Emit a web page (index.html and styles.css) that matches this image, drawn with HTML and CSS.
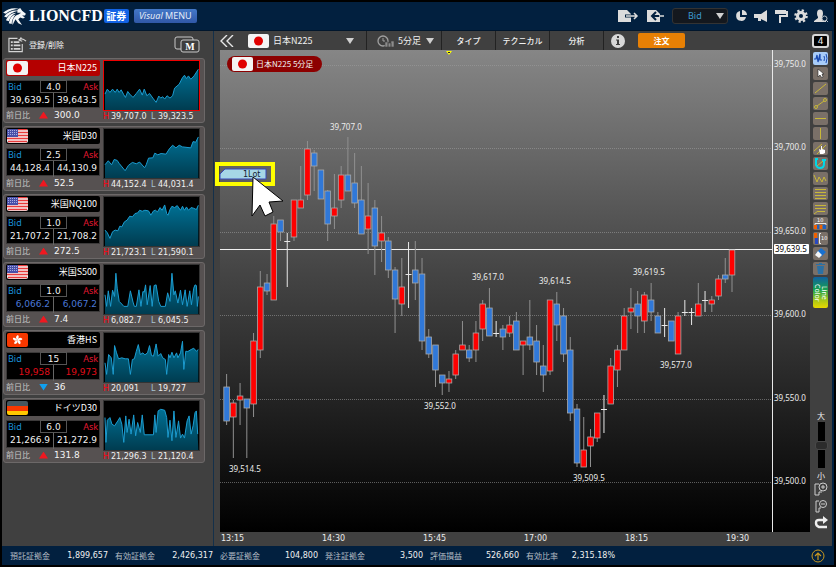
FILE: index.html
```html
<!DOCTYPE html>
<html lang="ja">
<head>
<meta charset="utf-8">
<title>LIONCFD</title>
<link rel="stylesheet" href="styles.css">
</head>
<body>
<svg class="defs" width="0" height="0" aria-hidden="true">
  <defs>
    <linearGradient id="area" x1="0" y1="0" x2="0" y2="1"><stop offset="0" stop-color="#007094"/><stop offset="1" stop-color="#003c50"/></linearGradient>
    <symbol id="jp" viewBox="0 0 21 14"><rect width="21" height="14" rx="2" fill="#f4f4f4"/><circle cx="10.500" cy="7" r="4.500" fill="#e00000"/></symbol>
    <symbol id="us" viewBox="0 0 21 14"><rect width="21" height="14" rx="2" fill="#f4eeee"/><path d="M1 .5H20M0 3.500H21M0 6.500H21M0 9.500H21M1 12.500H20" stroke="#e83a3a" stroke-width="1.400"/><path d="M1 0H11V8H0V1Z" fill="#4850a8"/><path d="M1 1.500H11M1 3.500H11M1 5.500H11" stroke="#a8ace0" stroke-width="1" stroke-dasharray="1 1"/></symbol>
    <symbol id="hk" viewBox="0 0 21 14"><rect width="21" height="14" rx="2" fill="#f83800"/><g fill="#fff"><path id="petal" d="M10.500 7C8.500 5.500 8.500 3 11 2C12.500 3.500 11.500 5 10.500 7Z"/><use href="#petal" transform="rotate(72 10.500 7)"/><use href="#petal" transform="rotate(144 10.500 7)"/><use href="#petal" transform="rotate(216 10.500 7)"/><use href="#petal" transform="rotate(288 10.500 7)"/></g></symbol>
    <symbol id="de" viewBox="0 0 21 14"><path d="M2 0H19Q21 0 21 2V5H0V2Q0 0 2 0Z" fill="#46565e"/><rect y="5" width="21" height="5" fill="#f83800"/><path d="M0 10H21V12Q21 14 19 14H2Q0 14 0 12Z" fill="#ffc800"/></symbol>
  </defs>
</svg>
<div class="app">
  <header class="topbar">
    <svg class="lion" viewBox="0 0 24 20" aria-hidden="true"><g fill="#f4f6f8"><path d="M0 6C4 2 11 0 17 2C12 2 6 4 3 7Z"/><path d="M1 10C5 5 11 3 16 4C11 5 6 8 4 11Z"/><path d="M3 14C5 9 9 6 14 6C10 8 7 11 6 15Z"/><path d="M6 17C7 12 9 9 13 8C11 11 9 14 9 18Z"/><path d="M15 3L18 1L20 4L24 7L23 9L20 9L23 11L21 12L18 11L16 13L18 16L20 19L16 17L13 13L10 19C9 14 12 9 16 8L19 6L15 6Z"/></g></svg>
    <span class="brand">LIONCFD</span><span class="brand-tag">証券</span>
    <button class="visual" type="button"><i>Visual</i> MENU</button>
    <span class="grow"></span>
    <button class="ib out" type="button" aria-label="エクスポート"><svg viewBox="0 0 22 14"><path d="M1 1H10L14 5V13H1Z" fill="#dcdcdc"/><path d="M8 7H16" stroke="#02203f" stroke-width="3" fill="none"/><path d="M16 3L20 7L16 11" stroke="#02203f" stroke-width="3" fill="none"/><path d="M9 7H20M17 4L20 7L17 10" stroke="#dcdcdc" stroke-width="1.500" fill="none"/></svg></button>
    <button class="ib in" type="button" aria-label="インポート"><svg viewBox="0 0 18 14"><path d="M1 1H10L14 5V13H1Z" fill="#dcdcdc"/><path d="M6 7H15M10 3L6 7L10 11" stroke="#02203f" stroke-width="2" fill="none"/><path d="M13 7H18" stroke="#dcdcdc" stroke-width="1.500" fill="none"/></svg></button>
    <span class="pick rate"><select aria-label="レート種別"><option>Bid</option></select></span>
    <button class="ib s" type="button" aria-label="グラフ"><svg viewBox="0 0 14 14"><path d="M6 2A5 5 0 1 0 12 8H6Z" fill="#dcdcdc"/><path d="M8 1A5 5 0 0 1 13 6H8Z" fill="#dcdcdc"/></svg></button>
    <button class="ib s" type="button" aria-label="お知らせ"><svg viewBox="0 0 14 14"><path d="M13 1V13L7 10V12H4V9H2V5H7Z" fill="#dcdcdc"/><path d="M1 5V9" stroke="#dcdcdc" stroke-width="2"/></svg></button>
    <button class="ib s" type="button" aria-label="配色"><svg viewBox="0 0 14 14"><path d="M1 1H12V5H1Z" fill="#dcdcdc"/><path d="M12 3H13V7H6V14" fill="none" stroke="#dcdcdc" stroke-width="2"/></svg></button>
    <button class="ib s" type="button" aria-label="設定"><svg viewBox="0 0 14 14"><circle cx="7" cy="7" r="3.500" fill="none" stroke="#dcdcdc" stroke-width="3"/><circle cx="7" cy="7" r="5.500" fill="none" stroke="#dcdcdc" stroke-width="2.600" stroke-dasharray="2.160 2.160"/></svg></button>
    <button class="ib s" type="button" aria-label="ユーザー"><svg viewBox="0 0 14 14"><ellipse cx="6" cy="4.500" rx="3" ry="4" fill="#dcdcdc"/><path d="M4 7H8V9L12 12V13H0V12L4 9Z" fill="#dcdcdc"/><circle cx="10.500" cy="9.500" r="2.500" fill="#02203f" stroke="#b8c0c8" stroke-width="1"/><path d="M12 11L14 13" stroke="#b8c0c8"/></svg></button>
  </header>

  <div class="work">
    <aside class="side">
      <div class="side-head">
        <button class="edit" type="button"><svg viewBox="0 0 20 18" aria-hidden="true"><path d="M15 8V16H1V2H10" fill="none" stroke="#d4d4d4" stroke-width="1.200"/><path d="M3 6H5M3 9.500H5M3 13H5M6 6H12M6 9.500H13M6 13H13" stroke="#d4d4d4" stroke-width="1.800"/><path d="M11 4C13 2 16 2 19 5M14 1L12 4L15 5" fill="none" stroke="#d4d4d4" stroke-width="1.200"/></svg>登録/削除</button>
        <button class="ib multi" type="button" aria-label="マルチ"><svg viewBox="0 0 26 18"><rect x="1" y="1" width="18" height="12" rx="2" fill="none" stroke="#c8c8c8"/><rect x="7" y="4" width="18" height="12" rx="2" fill="#3e3e3e" stroke="#c8c8c8"/><text x="16" y="14" text-anchor="middle" class="m">M</text></svg></button>
      </div>
      <div class="cards" id="cards"></div>
    </aside>

    <main class="desk">
      <nav class="tools">
        <button class="ib collapse" type="button" aria-label="たたむ"><svg viewBox="0 0 14 12"><path d="M7 0L1 6L7 12M13 0L7 6L13 12" fill="none" stroke="#e8e8e8" stroke-width="1.400"/></svg></button>
        <span class="pick symbol"><svg class="flag"><use href="#jp"/></svg><select aria-label="銘柄"><option>日本N225</option></select></span>
        <span class="pick frame"><svg class="clock" viewBox="0 0 17 12" aria-hidden="true"><circle cx="6" cy="6" r="5" fill="none" stroke="#a0a0a0" stroke-width="1.300"/><path d="M6 3V6H8" stroke="#a0a0a0" fill="none"/><path d="M8 7H11V12H8ZM11 8H14V12H11ZM14 6H17V12H14Z" fill="#8c8c8c" stroke="#404040" stroke-width=".6"/></svg><select aria-label="足種"><option>5分足</option></select></span>
        <button class="tab" type="button">タイプ</button>
        <button class="tab" type="button">テクニカル</button>
        <button class="tab" type="button">分析</button>
        <button class="ib info" type="button" aria-label="情報"><svg viewBox="0 0 14 14"><circle cx="7" cy="7" r="7" fill="#d8d8d8"/><path d="M6 2H8V4H6ZM5 5.500H8V10H9V11H5V10H6V6.500H5Z" fill="#404040"/></svg></button>
        <button class="order" type="button">注文</button>
        <span class="grow"></span>
        <button class="count" type="button">4</button>
      </nav>
      <div class="stage">
        <div class="chart">
          <svg id="chart" viewBox="220 50 590 496" role="img" aria-label="日本N225 5分足">
            <defs><linearGradient id="bg" x1="0" y1="0" x2="0" y2="1"><stop offset="0" stop-color="#868686"/><stop offset=".45" stop-color="#464646"/><stop offset="1" stop-color="#000"/></linearGradient></defs>
            <rect x="220" y="50" width="590" height="482" fill="url(#bg)"/>
            <g id="grid"></g>
            <path d="M220 249.500H773" class="now"/>
            <path d="M772.500 50V532" class="axis"/>
            <g id="candles"></g>
            <path d="M446 51H452L449 55Z" fill="#ff0"/><path d="M448 52H450V53H448Z" fill="#222"/>
            <g id="labels"></g>
            <rect x="774" y="244" width="35" height="10" rx="1" fill="#fff"/><text x="775" y="252" class="nowprice">39,639.5</text>
            <path d="M220 179V174L225 169H266V179Z" fill="#a6d6e6" stroke="#3848b8"/>
            <text x="243" y="177" class="lot">1Lot</text>
            <rect x="217" y="164" width="56" height="20" fill="none" stroke="#ff0" stroke-width="4"/>
            <path d="M253 177L283 201L269 202L273 212L265 216L260 205L252 216Z" fill="#fff" stroke="#000"/>
          </svg>
          <div class="pill"><svg class="flag"><use href="#jp"/></svg>日本N225 5分足</div>
        </div>
        <div class="rail">
          <div class="draw">
            <button type="button" class="on" aria-label="波形"><svg viewBox="0 0 15 13"><path d="M1 7H3L4 3L5 10L7 2V8H9" fill="none" stroke="#1848b0" stroke-width="1.200" style="stroke:#1848b0"/><path d="M11 4Q12 6 11 9M13 2Q15 6 13 11" style="stroke:#1848b0"/></svg></button>
            <button type="button" aria-label="選択"><svg viewBox="0 0 15 13"><path d="M5 2V10L7 8L9 11L10 10L9 7H11Z" fill="#fff" style="stroke:#222;stroke-width:.6"/></svg></button>
            <button type="button" aria-label="直線"><svg viewBox="0 0 15 13"><path d="M2 11L13 2"/></svg></button>
            <button type="button" aria-label="線分"><svg viewBox="0 0 15 13"><path d="M4 9L11 4"/><circle cx="3" cy="10" r="1.500"/><circle cx="12" cy="3" r="1.500"/></svg></button>
            <button type="button" aria-label="水平線"><svg viewBox="0 0 15 13"><path d="M2 6.500H13"/></svg></button>
            <button type="button" aria-label="垂直線"><svg viewBox="0 0 15 13"><path d="M7.500 1V12"/></svg></button>
            <button type="button" aria-label="平行線"><svg viewBox="0 0 15 13"><path d="M1 9L9 2M4 12L13 3"/><path d="M6 7L8 8V4H9V7L12 8V11L10 12H7Z" class="solid" fill="#fff"/></svg></button>
            <button type="button" aria-label="回転"><svg viewBox="0 0 15 13"><path d="M4 9L10 4"/><path d="M3 3V8Q4 11 7 11Q11 11 11 7V3M2 2H5M9 3H13" class="turn"/></svg></button>
            <button type="button" aria-label="波"><svg viewBox="0 0 15 13"><path d="M1 3L4 10L6 5L9 10L11 5L13 9"/></svg></button>
            <button type="button" aria-label="フィボナッチ"><svg viewBox="0 0 15 13"><path d="M2 2.500H13M2 5.500H13M2 8.500H13M2 11.500H13"/></svg></button>
            <button type="button" aria-label="メモ"><svg viewBox="0 0 15 13"><path d="M2 3.500H13M2 6.500H13M5 9.500H12M1 12L5 9"/></svg></button>
            <button type="button" aria-label="横目盛"><svg viewBox="0 0 15 13"><text x="4" y="5">10</text><path d="M2 8V6.500H13V8" class="white"/><path d="M1 8H4V12H1ZM7 8H9V12H7Z" class="solid" fill="#f06000"/><path d="M4 8H6V12H4ZM10 8H13V12H10Z" class="solid" fill="#2060c0"/></svg></button>
            <button type="button" aria-label="縦目盛"><svg viewBox="0 0 15 13"><path d="M1 1H4V6H1Z" class="solid" fill="#f06000"/><path d="M2 6H5V12H2Z" class="solid" fill="#2848c0"/><path d="M8 1.500H6.500V11.500H8" class="white"/><text x="8" y="8">10</text></svg></button>
            <button type="button" aria-label="消しゴム"><svg viewBox="0 0 15 13"><path d="M8 1L13 5L8 10L3 6Z" class="solid" fill="#1870d0"/><path d="M5 4L9 8L6 11L2 8Z" class="solid" fill="#f4f4f4"/></svg></button>
            <button type="button" aria-label="削除"><svg viewBox="0 0 15 13"><path d="M4 4H11L10 12H5ZM3 2H12V3H3ZM6 1H9V2H6Z" class="solid" fill="#2c70a4"/></svg></button>
            <button type="button" class="color"><span>Line<br>Color</span></button>
          </div>
          <div class="zoom">
            <label for="size">大</label>
            <input id="size" type="range" min="0" max="100" value="50">
            <span>小</span>
            <button class="ib" type="button" aria-label="拡大"><svg viewBox="0 0 14 14"><path d="M5 2H1V13H5V10H8" fill="none" stroke="#ccc"/><circle cx="9" cy="5" r="4" fill="none" stroke="#ccc"/><path d="M7 5H11M9 3V7" stroke="#ccc"/></svg></button>
            <button class="ib" type="button" aria-label="縮小"><svg viewBox="0 0 14 14"><path d="M5 2H2V13H5V9H7" fill="none" stroke="#ccc"/><circle cx="9" cy="5" r="3.500" fill="none" stroke="#ccc"/><path d="M7 5H11" stroke="#ccc"/></svg></button>
            <button class="ib" type="button" aria-label="戻す"><svg viewBox="0 0 14 14"><path d="M10 4H5Q2 4 2 7T5 11H13" fill="none" stroke="#eee" stroke-width="2.400"/><path d="M9 0L14 4L9 8Z" fill="#eee"/></svg></button>
          </div>
        </div>
      </div>
    </main>
  </div>

  <footer class="status">
    <dl>
      <div><dt>預託証拠金</dt><dd>1,899,657</dd></div>
      <div><dt>有効証拠金</dt><dd>2,426,317</dd></div>
      <div><dt>必要証拠金</dt><dd>104,800</dd></div>
      <div><dt>発注証拠金</dt><dd>3,500</dd></div>
      <div class="short"><dt>評価損益</dt><dd>526,660</dd></div>
      <div class="short"><dt>有効比率</dt><dd>2,315.18%</dd></div>
    </dl>
    <button class="ib up" type="button" aria-label="開く"><svg viewBox="0 0 14 14"><circle cx="7" cy="7" r="6" fill="none" stroke="#c89820"/><path d="M7 11V4M4 7L7 4L10 7" fill="none" stroke="#c89820" stroke-width="1.200"/></svg></button>
  </footer>
</div>
<script src="app.js"></script>
</body>
</html>
```
FILE: styles.css
```css
* { box-sizing: border-box; }
body { margin: 0; background: #000; color: #f0f0f0; font: 9px/12px "Noto Sans CJK JP", "Noto Sans", sans-serif; }
button, select, input { font: inherit; color: inherit; margin: 0; padding: 0; border: 0; background: none; }
svg { display: block; }
.defs { position: absolute; }
.grow { flex: 1; }
.ib { flex: none; display: block; }
.ib svg { width: 100%; height: 100%; }

.app { min-height: 100vh; padding: 2px; display: flex; flex-direction: column; }
.topbar { height: 29px; flex: none; display: flex; align-items: center; padding: 0 6px 0 1px; background: #02203f; border-bottom: 1px solid #01162c; }
.lion { width: 23px; height: 19px; margin-right: 3px; }
.brand { font: bold 16px/20px "Liberation Serif", serif; color: #fff; }
.brand-tag { margin-left: 1px; width: 25px; height: 14px; border-radius: 2px; background: #1263e6; color: #fff; font-weight: bold; font-size: 10px; line-height: 14px; text-align: center; }
.visual { margin-left: 5px; width: 63px; height: 14px; border-radius: 2px; background: linear-gradient(#4478c8, #3058a8); color: #e4ecf8; font: 9px/14px "Noto Sans", sans-serif; white-space: nowrap; }
.out { width: 22px; height: 14px; margin-right: 7px; }
.in { width: 18px; height: 14px; margin-right: 8px; }
.s { width: 14px; height: 14px; margin-left: 6px; }

.pick { position: relative; display: flex; align-items: center; }
.pick select { appearance: none; flex: 1; height: 100%; min-width: 0; }
.pick::after { content: ""; position: absolute; right: 12px; border: 4px solid transparent; border-top: 6px solid #d0d0d0; border-bottom: 0; pointer-events: none; }
.rate { width: 56px; height: 16px; border: 1px solid #333; border-radius: 3px; background: #14181e; }
.rate select { padding-left: 15px; color: #3d9ad0; font-family: "Noto Sans", sans-serif; }
.rate::after { right: 3px; }

.work { flex: 1; display: flex; background: #404040; border-right: 2px solid #02203f; }
.side { width: 212px; flex: none; padding: 3px 8px 0 1px; border-right: 1px solid #14304a; }
.side-head { height: 24px; display: flex; justify-content: space-between; padding: 0 5px; }
.edit { display: flex; align-items: center; gap: 2px; height: 21px; font-size: 8px; font-weight: 500; color: #ddd; }
.edit svg { width: 19px; height: 18px; }
.multi { width: 26px; height: 18px; margin-top: 2px; }
.m { font: bold 10px "Liberation Serif", serif; fill: #fff; }
.cards { display: grid; gap: 3px; }
.card { height: 65px; display: grid; grid-template-columns: 94px 1fr; column-gap: 3px; padding: 1px 4px 0 2px; border: 1px solid #6c6868; border-radius: 3px; background: #565151; }
.name { height: 16px; display: flex; align-items: center; justify-content: space-between; padding: 0 3px 0 1px; border-radius: 2px; background: #000; color: #fff; }
.flag { width: 21px; height: 14px; flex: none; }
.active .name { background: #b40000; }
.quote { position: relative; height: 28px; margin-top: 4px; display: grid; grid-template: 12px 16px / 1fr 1fr; background: #000; border: 1px solid #3c3a3a; }
.bid { padding-left: 1px; color: #1a90d8; font: 9px/12px "Noto Sans", sans-serif; }
.ask { padding-right: 1px; text-align: right; color: #e01830; font: 9px/12px "Noto Sans", sans-serif; }
.price { text-align: right; padding-right: 3px; font: 9px/14px "DejaVu Sans", sans-serif; white-space: nowrap; }
.price + .price { border-left: 1px solid #666; padding-right: 2px; }
.spread { position: absolute; top: -1px; left: 33px; width: 27px; height: 13px; border: 1px solid #555; background: #000; text-align: center; font: 9px/12px "DejaVu Sans", sans-serif; }
.blue .price { color: #4a78d8; }
.red .price { color: #e00c18; }
.diff { display: flex; align-items: center; height: 14px; color: #c8c8c8; font-size: 8px; }
.diff b { margin-left: 9px; width: 9px; height: 7px; background: #f01820; clip-path: polygon(50% 0, 100% 100%, 0 100%); }
.diff .down { background: #10a0f0; clip-path: polygon(0 0, 100% 0, 50% 100%); }
.diff span { margin-left: 6px; color: #f4f4f4; font: 9px/12px "DejaVu Sans", sans-serif; }
.spark { width: 100%; height: 51px; background: #000; border: 1px solid #333; }
.active .spark { border-color: #f00000; }
.range { display: grid; grid-template-columns: 8px 40px 7px 1fr; font: 8px/12px "DejaVu Sans", sans-serif; white-space: nowrap; }
.hi { color: #ff0010; }
.lo { color: #a8c4d0; }

.desk { flex: 1; min-width: 0; }
.tools { height: 19px; display: flex; align-items: center; padding-right: 3px; }
.collapse { width: 14px; height: 12px; margin: 0 14px 0 6px; }
.symbol { width: 119px; height: 19px; gap: 4px; border-right: 1px solid #222; }
.frame { width: 75px; height: 19px; padding-left: 10px; gap: 4px; border-right: 1px solid #222; }
.frame::after { right: 7px; }
.clock { width: 17px; height: 12px; flex: none; }
.tab { width: 54px; height: 19px; border-right: 1px solid #222; white-space: nowrap; font-size: 8px; font-weight: 500; }
.info { width: 14px; height: 14px; margin: 0 13px 0 7px; }
.order { width: 47px; height: 15px; border-radius: 2px; background: #e88004; color: #fff; font-weight: bold; font-size: 8px; line-height: 15px; }
.count { width: 17px; height: 14px; border: 2px solid #d8d8d8; border-radius: 3px; background: #000; font: 9px/10px "DejaVu Sans", sans-serif; }
.stage { display: flex; padding-left: 6px; }
.chart { position: relative; flex: 1; min-width: 0; }
.chart > svg { width: 100%; overflow: visible; }
.pill { position: absolute; left: 7px; top: 6px; height: 16px; display: flex; align-items: center; gap: 3px; padding: 0 9px 0 5px; border-radius: 8px; background: #8c0000; font-size: 8px; }
#grid path { stroke: #a0a0a0; stroke-opacity: .55; stroke-dasharray: 1 1; }
#labels text, .nowprice { font: 8px "Noto Sans", sans-serif; fill: #ececec; }
#labels .time { font: 8px "DejaVu Sans", sans-serif; }
.chart .nowprice { fill: #000; }
.lot { font: 8px "DejaVu Sans", sans-serif; fill: #123; }
.now { stroke: #f0f0f0; }
.axis { stroke: #e8e8e8; }

.rail { width: 22px; flex: none; display: flex; flex-direction: column; justify-content: space-between; padding: 2px 3px 14px 3px; }
.draw { display: grid; gap: 2px; }
.draw button { width: 15px; height: 13px; border-radius: 2px; background: #7a7068; }
.draw svg { width: 15px; height: 13px; fill: none; stroke: #c8b838; }
.draw text { font: 5px "DejaVu Sans", sans-serif; fill: #fff; stroke: none; }
.draw .solid { stroke: none; }
.draw .white { stroke: #e8e8e8; }
.draw .turn { stroke: #00d8e8; stroke-width: 2; }
.draw .on { background: #a8ccf8; }
.draw .color { height: 31px; background: linear-gradient(#1060a0, #18a050 40%, #a8c818 75%, #e8d800); color: #fff; }
.color span { display: block; writing-mode: vertical-rl; height: 31px; width: 15px; text-align: center; font: 7px/7px "Noto Sans", sans-serif; }
.zoom { display: grid; justify-items: center; font-size: 8px; line-height: 10px; }
.zoom input { appearance: none; writing-mode: vertical-lr; width: 13px; height: 46px; margin: 1px 0 3px; background: linear-gradient(90deg, #404040 3px, #000 3px 10px, #404040 10px); }
.zoom input::-webkit-slider-thumb { appearance: none; width: 13px; height: 9px; border-radius: 3px; background: #2c2c2c; border: 1px solid #484848; }
.zoom .ib { width: 14px; height: 14px; margin: 1px 0 2px; }

.status { flex: none; min-height: 19px; display: flex; align-items: center; justify-content: space-between; padding: 0 9px 0 8px; background: #02203f; }
.status dl { display: flex; gap: 7px; margin: 0; }
.status dl div { width: 98px; display: flex; justify-content: space-between; }
.status dl .short { width: 89px; }
.status dt { color: #b4bcc4; font-size: 8px; }
.status dd { margin: 0; font: 8px/12px "DejaVu Sans", sans-serif; color: #f0f0f0; }
.up { width: 14px; height: 14px; }
```
FILE: app.js
```js
// name, flag, bid, ask, spread, change, direction, high, low, card class, sparkline
const quotes = [
  ['日本N225', 'jp', '39,639.5', '39,643.5', '4.0', '300.0', 'up', '39,707.0', '39,323.5', 'active', '3,100 10,85 18,95 26,85 34,95 40,85 46,95 52,87 60,102 65,110 72,92 78,100 88,110 98,98 108,85 116,103 122,85 130,105 138,98 148,112 158,125 166,106 172,112 178,108 184,115 191,105 200,112 208,105 214,82 228,70 238,50 244,43 250,53 256,45 263,55 273,45 286,25'],
  ['米国D30', 'us', '44,128.4', '44,130.9', '2.5', '52.5', 'up', '44,152.4', '44,031.4', '', '3,108 13,96 23,108 31,92 40,95 46,104 64,126 74,110 86,101 98,105 108,100 123,117 128,108 135,88 148,87 154,73 163,78 173,74 188,76 198,60 208,49 218,57 228,49 238,54 263,57 270,38 278,40 286,24'],
  ['米国NQ100', 'us', '21,707.2', '21,708.2', '1.0', '272.5', 'up', '21,723.1', '21,590.1', '', '3,100 10,108 18,125 26,105 34,100 42,102 48,88 54,90 62,75 70,70 78,58 86,60 94,50 102,48 108,40 116,43 124,40 135,42 142,55 150,42 156,40 162,45 170,32 176,40 184,24 190,50 194,55 200,38 206,28 214,32 222,26 232,40 238,28 244,40 250,30 256,40 264,32 272,34 280,38 286,25'],
  ['米国S500', 'us', '6,066.2', '6,067.2', '1.0', '7.4', 'up', '6,082.7', '6,045.5', 'blue', '3,90 8,125 13,78 20,125 26,76 32,95 36,25 40,70 46,110 54,118 60,125 72,125 80,78 88,112 92,125 98,125 106,75 112,125 118,80 122,82 126,60 131,120 140,62 146,125 152,62 158,60 166,110 172,125 186,125 193,84 200,110 206,25 212,90 216,78 224,115 232,76 238,120 246,75 252,125 260,78 265,120 272,70 276,60 280,62 283,125 286,95'],
  ['香港HS', 'hk', '19,958', '19,973', '15', '36', 'down', '20,091', '19,727', 'red', '3,90 8,125 14,65 22,75 28,125 32,38 38,60 44,78 54,75 64,78 74,78 80,125 86,80 92,78 98,55 104,35 110,65 118,60 124,66 132,60 138,38 144,68 150,70 158,33 164,70 172,62 178,75 186,80 190,125 196,65 200,75 206,58 212,75 220,60 224,75 232,60 238,25 242,110 248,55 254,56 264,50 272,46 280,55 286,50'],
  ['ドイツD30', 'de', '21,266.9', '21,272.9', '6.0', '131.8', 'up', '21,296.3', '21,120.4', '', '3,50 6,125 10,58 18,50 24,70 32,75 42,60 48,50 54,70 60,125 66,45 70,95 76,55 82,100 90,42 96,105 102,65 110,95 116,42 122,102 150,102 154,42 158,95 164,30 172,25 184,28 190,50 194,110 200,58 206,120 212,30 218,110 226,60 232,112 238,100 244,112 252,60 258,45 264,100 270,75 276,35 280,30 284,100']
];
document.getElementById('cards').innerHTML = quotes.map(([name, flag, bid, ask, spread, change, dir, hi, lo, cls, line]) => `
  <article class="card ${cls}">
    <div>
      <div class="name"><svg class="flag"><use href="#${flag}"/></svg>${name}</div>
      <div class="quote"><span class="bid">Bid</span><span class="ask">Ask</span><span class="price">${bid}</span><span class="price">${ask}</span><span class="spread">${spread}</span></div>
      <div class="diff">前日比<b class="${dir}"></b><span>${change}</span></div>
    </div>
    <div>
      <svg class="spark" viewBox="0 0 288 148" preserveAspectRatio="none"><polygon points="3,148 ${line} 286,148" fill="url(#area)"/><polyline points="${line}" fill="none" stroke="#1c9cd0" vector-effect="non-scaling-stroke"/></svg>
      <div class="range"><span class="hi">H</span><span>${hi}</span><span class="lo">L</span><span>${lo}</span></div>
    </div>
  </article>`).join('');

// r = rise, b = fall, d = unchanged; then wick top, body top, body bottom, wick bottom
const candles = `b374,387,421,425 r400,403,417,458 r383,396,400,425 b399,399,408,458 r333,341,404,417 r271,287,350,358 b274,283,291,295 r216,224,300,300 b220,220,232,241 d233,241,241,287
r200,200,237,241 r166,200,208,208 r141,149,195,200 b150,153,166,191 b170,170,199,199 b190,191,224,241 r174,208,216,229 r166,175,200,208 b137,175,191,191 b153,183,203,208
b166,200,234,234 r183,216,229,254 b200,208,246,275 r216,233,241,262 b237,241,270,278 b267,270,299,333 r258,287,304,316 d242,274,274,308 b241,270,283,300 b258,274,341,350
b329,337,354,358 b345,345,370,387 b375,375,383,395 r371,379,383,392 r350,354,375,379 r321,345,350,350 b345,350,358,362 r321,333,350,362 r300,304,329,341 b288,308,336,336
d321,333,333,337 b325,329,337,350 r316,325,333,337 b312,321,350,350 r341,341,345,375 b300,337,345,350 b325,341,362,375 b345,366,375,392 r300,300,371,375 b292,304,325,341
b308,316,354,362 b337,350,413,421 b404,409,463,467 r417,450,467,467 r429,437,446,467 r413,413,438,442 d395,409,409,433 r358,366,404,404 r345,350,370,387 r308,316,350,350
r288,308,312,329 b291,304,316,333 r292,295,321,333 b283,300,312,321 b312,316,333,333 d308,325,325,337 b321,321,341,341 r312,316,354,354 d300,312,312,316 d308,312,312,325
r283,304,316,316 d291,300,300,312 r296,300,304,312 r275,279,296,300 b258,275,279,283 r250,250,275,292`.split(/\s+/);
const step = 505.4 / (candles.length - 1);
document.getElementById('candles').innerHTML = candles.map((c, i) => {
  const [hi, top, bottom, lo] = c.slice(1).split(',').map(Number);
  const x = 226.6 + i * step;
  const wick = `<path d="M${x} ${hi}V${lo}" stroke="${c[0] === 'd' ? '#e8e8e8' : '#909090'}"/>`;
  if (c[0] === 'd') return wick + `<path d="M${x - 3} ${top + 0.5}H${x + 3}" stroke="#e8e8e8"/>`;
  return wick + `<rect x="${x - 2.8}" y="${top}" width="5.6" height="${bottom - top}" fill="${c[0] === 'r' ? '#f00' : '#3078d8'}" stroke="#a8a8a8" stroke-width=".8"/>`;
}).join('');

const levels = [['39,750.0', 65], ['39,700.0', 148], ['39,650.0', 232], ['39,600.0', 315], ['39,550.0', 399], ['39,500.0', 482]];
document.getElementById('grid').innerHTML = levels.map(([, y]) => `<path d="M220 ${y + 0.5}H772"/>`).join('');
const notes = [['39,514.5', 229, 472], ['39,707.0', 330, 130], ['39,552.0', 424, 409], ['39,617.0', 472, 280], ['39,614.5', 539, 284], ['39,509.5', 573, 481], ['39,619.5', 633, 275], ['39,577.0', 660, 368]];
const times = ['13:15', '14:30', '15:45', '17:00', '18:15', '19:30'];
document.getElementById('labels').innerHTML =
  levels.map(([t, y]) => `<text x="774" y="${y + 2}">${t}</text>`).join('') +
  notes.map(([t, x, y]) => `<text x="${x}" y="${y}">${t}</text>`).join('') +
  times.map((t, i) => `<text class="time" x="${221 + i * 101}" y="541">${t}</text>`).join('');
```
